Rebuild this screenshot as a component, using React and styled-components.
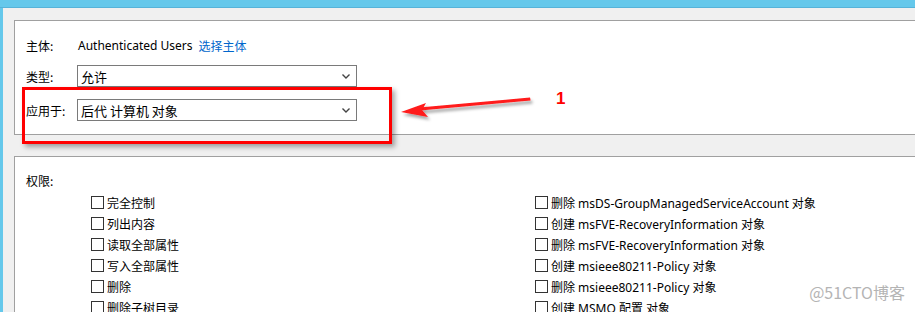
import React from 'react';
import styled, { createGlobalStyle } from 'styled-components';

const GlobalStyle = createGlobalStyle`
  html, body {
    margin: 0;
    padding: 0;
    background: #f0f0f0;
  }
  body {
    font-family: "Noto Sans", "Noto Sans CJK SC", sans-serif;
    font-size: 12px;
    color: #000;
  }
`;

const Window = styled.div`
  position: relative;
  width: 915px;
  height: 312px;
  overflow: hidden;
  display: flex;
  flex-direction: column;
  background: #f0f0f0;
`;

const TitleBar = styled.div`
  height: 7px;
  background: #65c8eb;
  border-bottom: 1px solid #56b3d9;
  flex-shrink: 0;
`;

const Body = styled.div`
  flex: 1;
  display: flex;
  min-height: 0;
`;

const EdgeStrip = styled.div`
  width: 3px;
  background: #65c8eb;
  flex-shrink: 0;
`;

const Content = styled.div`
  flex: 1;
  display: flex;
  flex-direction: column;
  gap: 21px;
  padding: 12px 0 0 11px;
  min-width: 0;
`;

const Panel = styled.div`
  background: #fff;
  border: 1px solid #a0a0a0;
  border-right: none;
  padding: 0 0 0 11px;
  ${(p) => (p.$grow ? 'flex: 1;' : `height: ${p.$height}px; flex-shrink: 0;`)}
`;

const FieldRow = styled.div`
  display: flex;
  align-items: center;
  height: 22px;
  margin-top: ${(p) => p.$mt}px;
`;

const Label = styled.span`
  width: 51px;
  flex-shrink: 0;
  font-family: "Noto Sans CJK SC", sans-serif;
`;

const Value = styled.span`
  font-family: "Noto Sans", "Noto Sans CJK SC", sans-serif;
  margin-left: 1px;
`;

const Link = styled.a`
  color: #0066cc;
  margin-left: 6px;
  font-family: "Noto Sans CJK SC", sans-serif;
  text-decoration: none;
`;

const Select = styled.div`
  width: 280px;
  height: 22px;
  box-sizing: border-box;
  border: 1px solid #7a7a7a;
  display: flex;
  align-items: center;
  justify-content: space-between;
  padding: 0 6px 0 3px;
  font-family: "Noto Sans CJK SC", sans-serif;
  font-size: 13px;
`;

const Chevron = () => (
  <svg width="8" height="5" viewBox="0 0 8 5">
    <path d="M0.5 0.5 L4 4 L7.5 0.5" fill="none" stroke="#444" strokeWidth="1.4" />
  </svg>
);

const SectionTitle = styled.div`
  margin-top: 15px;
  font-family: "Noto Sans CJK SC", sans-serif;
`;

const PermGrid = styled.div`
  display: grid;
  grid-template-columns: 444px 1fr;
  grid-auto-flow: column;
  grid-template-rows: repeat(6, 21px);
  margin: 3px 0 0 65px;
`;

const PermItem = styled.label`
  display: flex;
  align-items: center;
  gap: 3px;
  font-family: "Noto Sans", "Noto Sans CJK SC", sans-serif;
  white-space: nowrap;
`;

const Box = styled.span`
  width: 13px;
  height: 13px;
  box-sizing: border-box;
  border: 1px solid #333;
  background: #fff;
  flex-shrink: 0;
`;

const Highlight = styled.div`
  position: absolute;
  left: 22px;
  top: 87px;
  width: 370px;
  height: 57px;
  box-sizing: border-box;
  border: 3px solid #ff0000;
  box-shadow: 3px 3px 5px rgba(0, 0, 0, 0.35);
`;

const Arrow = styled.svg`
  position: absolute;
  left: 396px;
  top: 90px;
  overflow: visible;
`;

const Marker = styled.span`
  position: absolute;
  left: 556px;
  top: 89px;
  color: #ff0000;
  font-family: "Liberation Sans", Arial, sans-serif;
  font-weight: bold;
  font-size: 17px;
`;

const Watermark = styled.span`
  position: absolute;
  right: 10px;
  bottom: 8px;
  color: #b4b4b4;
  font-family: "Noto Sans CJK SC", sans-serif;
  font-size: 16px;
  text-shadow: 0 0 2px #fff;
`;

const leftPerms = ['完全控制', '列出内容', '读取全部属性', '写入全部属性', '删除', '删除子树目录'];
const rightPerms = [
  '删除 msDS-GroupManagedServiceAccount 对象',
  '创建 msFVE-RecoveryInformation 对象',
  '删除 msFVE-RecoveryInformation 对象',
  '创建 msieee80211-Policy 对象',
  '删除 msieee80211-Policy 对象',
  '创建 MSMQ 配置 对象',
];

const App = () => (
  <>
    <GlobalStyle />
    <Window>
      <TitleBar />
      <Body>
        <EdgeStrip />
        <Content>
          <Panel $height={113}>
            <FieldRow $mt={13}>
              <Label>主体:</Label>
              <Value>Authenticated Users</Value>
              <Link>选择主体</Link>
            </FieldRow>
            <FieldRow $mt={9}>
              <Label>类型:</Label>
              <Select>
                <span>允许</span>
                <Chevron />
              </Select>
            </FieldRow>
            <FieldRow $mt={12}>
              <Label>应用于:</Label>
              <Select>
                <span>后代 计算机 对象</span>
                <Chevron />
              </Select>
            </FieldRow>
          </Panel>
          <Panel $grow>
            <SectionTitle>权限:</SectionTitle>
            <PermGrid>
              {[...leftPerms, ...rightPerms].map((p) => (
                <PermItem key={p}>
                  <Box />
                  {p}
                </PermItem>
              ))}
            </PermGrid>
          </Panel>
        </Content>
      </Body>
      <Highlight />
      <Arrow width="140" height="30" viewBox="0 0 140 30">
        <defs>
          <filter id="sh" x="-20%" y="-50%" width="140%" height="200%">
            <feDropShadow dx="2" dy="3" stdDeviation="1.5" floodColor="#000" floodOpacity="0.35" />
          </filter>
        </defs>
        <g filter="url(#sh)">
          <path d="M134 7.5 L134.6 10.5 L24 20.5 L23.4 17.5 Z" fill="#ff1a1a" />
          <path d="M5 22 L30 13 L26 20 L32 27 Z" fill="#ff1a1a" />
        </g>
      </Arrow>
      <Marker>1</Marker>
      <Watermark>@51CTO博客</Watermark>
    </Window>
  </>
);

export default App;
